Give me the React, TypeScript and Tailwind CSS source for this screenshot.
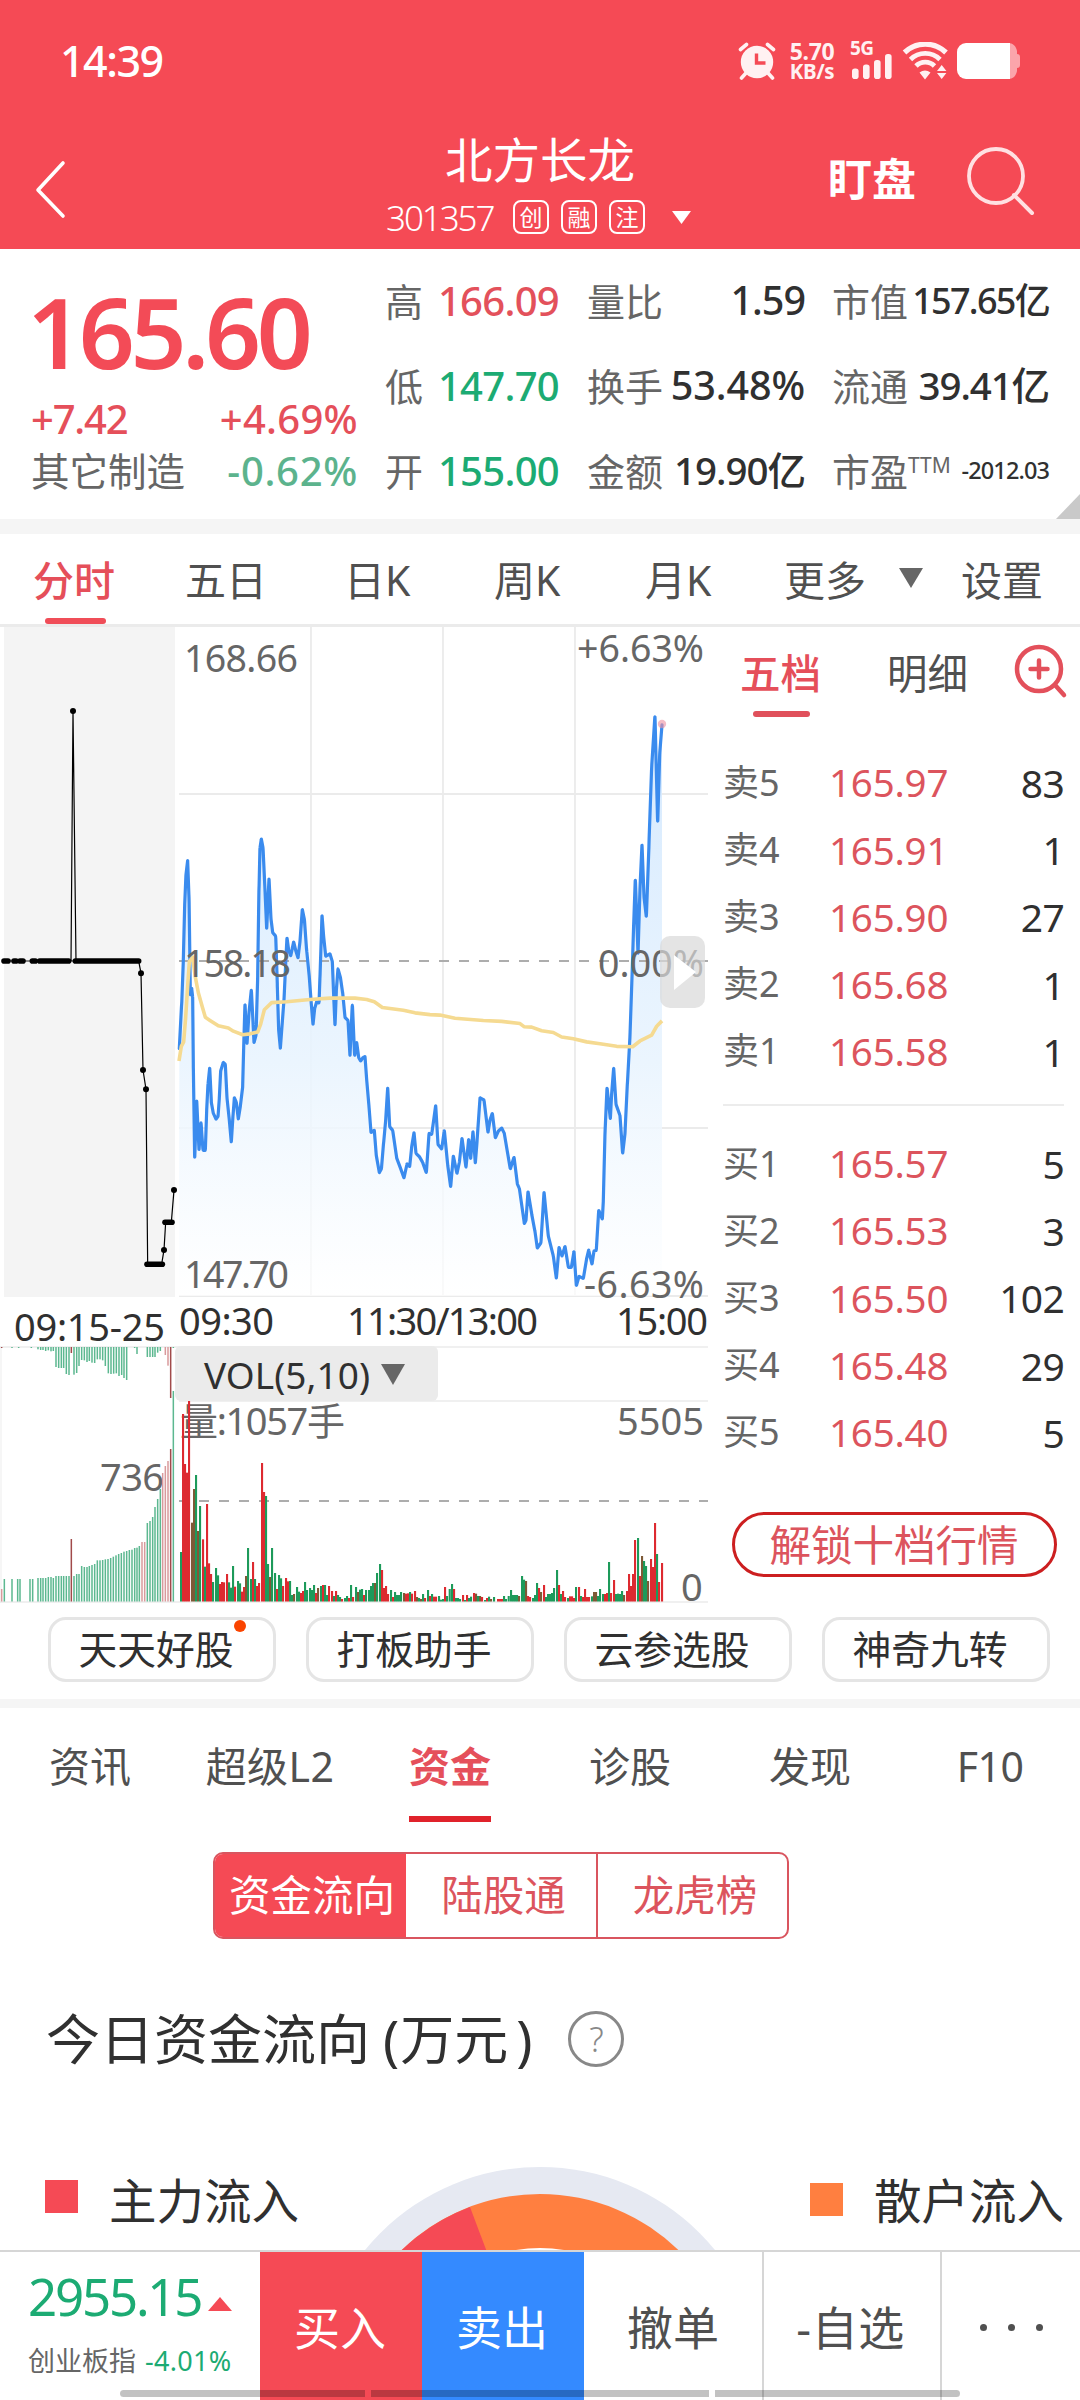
import React from "react";

type Pt = [number, number];
type Bar = [number, number, "r" | "g" | "b"];

const FONT = "font-['Noto_Sans','Noto_Sans_CJK_SC',sans-serif]";

/* Chart data: [u, v] pairs, three units per pixel across and 2.24 per pixel down. */
const PRICE: Pt[] = [
  [28,960],[35,860],[40,760],[44,640],[48,570],[53,538],[57,620],[61,840],[65,825],[68,845],[70,1000],[74,1207],[80,1075],[87,1188],[93,1125],[99,1188],[106,1188],[110,1100],[114,1040],[119,1003],[124,1080],[130,1105],[138,1118],[144,1112],[148,1070],[152,1010],[160,991],[166,995],[171,1070],[178,1120],[184,1170],[189,1110],[193,1070],[199,1080],[205,1118],[211,1090],[218,1045],[221,960],[225,860],[231,950],[237,880],[244,828],[252,947],[258,930],[263,800],[267,600],[270,510],[274,490],[279,510],[284,590],[290,693],[297,578],[303,670],[308,700],[317,708],[322,820],[326,920],[331,960],[336,910],[342,850],[347,770],[351,712],[356,740],[362,752],[367,735],[371,721],[377,740],[384,757],[390,720],[397,648],[403,670],[410,740],[418,800],[424,860],[429,906],[434,870],[440,855],[447,858],[450,800],[456,661],[461,710],[467,753],[480,748],[487,765],[491,840],[495,908],[499,830],[504,781],[511,800],[518,835],[525,890],[534,897],[540,977],[547,860],[554,976],[560,946],[566,980],[572,988],[579,980],[585,978],[590,1030],[597,1090],[603,1148],[613,1143],[619,1200],[628,1238],[634,1230],[641,1170],[647,1120],[653,1047],[659,1135],[668,1143],[680,1205],[690,1225],[702,1250],[711,1218],[719,1224],[725,1180],[732,1148],[738,1195],[748,1202],[758,1215],[769,1238],[777,1150],[785,1152],[791,1120],[797,1087],[804,1175],[815,1185],[823,1143],[833,1220],[842,1270],[850,1200],[861,1240],[868,1215],[876,1160],[888,1227],[896,1163],[902,1207],[909,1145],[916,1217],[921,1170],[930,1070],[942,1075],[954,1148],[960,1120],[967,1105],[976,1160],[985,1145],[995,1138],[1003,1150],[1021,1230],[1032,1203],[1042,1263],[1048,1273],[1063,1352],[1068,1345],[1074,1280],[1085,1330],[1095,1370],[1102,1407],[1113,1395],[1122,1280],[1135,1380],[1150,1425],[1159,1475],[1167,1405],[1176,1425],[1185,1403],[1195,1450],[1204,1450],[1212,1414],[1219,1491],[1227,1470],[1240,1475],[1250,1430],[1256,1411],[1266,1443],[1272,1413],[1279,1412],[1286,1322],[1297,1342],[1300,1300],[1305,1150],[1311,1047],[1321,1118],[1325,1060],[1331,1003],[1338,1085],[1350,1110],[1358,1195],[1365,1150],[1372,1040],[1380,930],[1386,800],[1391,680],[1396,580],[1404,750],[1410,600],[1416,502],[1422,620],[1429,665],[1437,500],[1445,330],[1455,213],[1463,455],[1469,300],[1476,235],
];

const AVERAGE: Pt[] = [
  [27,988],[34,955],[41,945],[47,890],[53,820],[58,765],[68,755],[76,800],[85,835],[97,867],[106,890],[120,897],[145,909],[175,914],[190,921],[218,929],[240,927],[263,923],[272,905],[283,873],[305,857],[350,855],[420,850],[480,847],[555,847],[590,850],[613,855],[637,868],[700,874],[735,880],[780,884],[810,885],[855,892],[940,897],[995,899],[1050,904],[1062,911],[1085,912],[1115,920],[1150,924],[1175,934],[1210,938],[1250,945],[1290,949],[1340,955],[1388,956],[1410,943],[1445,930],[1460,910],[1476,898],
];

const AUCTION: Pt[] = [
  [213,764],[219,204],[228,764],[416,764],[423,791],[429,1008],[438,1051],[443,1443],[485,1443],[492,1411],[497,1349],[514,1349],[522,1277],
];

const AUCTION_DOTS: Pt[] = [[219,204],[423,791],[429,1008],[438,1051],[492,1411],[522,1277]];

/* Per-minute volume: [u, top, tone], three units per pixel on both axes. */
const VOLUME: Bar[] = [
  [543,786,"g"],[549,372,"r"],[555,522,"r"],[561,548,"r"],[567,333,"r"],[576,698,"b"],[582,597,"b"],[588,555,"g"],[594,723,"b"],[600,648,"g"],[609,748,"r"],[615,830,"g"],[621,642,"r"],[627,820,"r"],[633,852,"r"],[639,876,"g"],[648,834,"g"],[654,856,"g"],[660,882,"r"],[666,876,"r"],[672,877,"r"],[681,852,"r"],[687,877,"g"],[693,893,"g"],[699,828,"g"],[705,890,"r"],[714,873,"g"],[720,880,"g"],[726,905,"r"],[732,891,"r"],[738,858,"b"],[744,774,"g"],[753,867,"g"],[759,816,"r"],[765,867,"g"],[771,888,"r"],[777,879,"r"],[786,519,"r"],[792,606,"r"],[798,618,"g"],[804,822,"g"],[810,861,"b"],[816,774,"g"],[825,849,"g"],[831,897,"r"],[837,855,"g"],[843,865,"g"],[849,888,"r"],[858,864,"r"],[864,874,"r"],[870,873,"g"],[876,915,"g"],[882,912,"b"],[891,891,"g"],[897,905,"g"],[903,909,"r"],[909,903,"r"],[915,876,"g"],[921,900,"g"],[930,894,"g"],[936,900,"g"],[942,885,"g"],[948,909,"r"],[954,894,"b"],[963,888,"g"],[969,885,"r"],[975,885,"g"],[981,915,"g"],[987,888,"r"],[996,903,"r"],[1002,918,"g"],[1008,903,"r"],[1014,915,"g"],[1020,921,"g"],[1026,927,"r"],[1035,924,"g"],[1041,918,"g"],[1047,924,"r"],[1053,885,"g"],[1059,921,"r"],[1068,891,"g"],[1074,906,"b"],[1080,899,"g"],[1086,897,"g"],[1092,915,"r"],[1098,900,"g"],[1107,900,"g"],[1113,888,"g"],[1119,879,"g"],[1125,879,"b"],[1131,849,"g"],[1140,822,"g"],[1146,840,"r"],[1152,894,"r"],[1158,888,"r"],[1164,912,"r"],[1173,900,"g"],[1179,921,"r"],[1185,906,"g"],[1191,915,"g"],[1197,915,"g"],[1203,906,"g"],[1212,909,"b"],[1218,911,"r"],[1224,910,"r"],[1230,906,"g"],[1236,911,"r"],[1245,903,"r"],[1251,921,"b"],[1257,924,"g"],[1263,927,"b"],[1269,912,"g"],[1275,924,"r"],[1284,900,"g"],[1290,918,"r"],[1296,912,"g"],[1302,920,"r"],[1308,920,"r"],[1317,918,"g"],[1323,929,"g"],[1329,927,"g"],[1335,891,"r"],[1341,918,"g"],[1349,897,"g"],[1356,882,"g"],[1362,897,"r"],[1368,924,"g"],[1374,924,"g"],[1380,927,"g"],[1389,915,"r"],[1395,930,"g"],[1401,915,"r"],[1407,924,"g"],[1413,920,"g"],[1422,909,"r"],[1428,911,"b"],[1434,918,"g"],[1440,918,"b"],[1446,921,"r"],[1455,930,"g"],[1461,924,"r"],[1467,920,"g"],[1473,927,"b"],[1482,921,"g"],[1494,927,"r"],[1500,927,"r"],[1506,927,"r"],[1512,918,"g"],[1518,927,"g"],[1526,918,"g"],[1533,900,"g"],[1539,915,"g"],[1545,915,"g"],[1551,915,"g"],[1557,918,"b"],[1566,858,"g"],[1572,869,"g"],[1578,873,"b"],[1584,918,"r"],[1590,921,"r"],[1599,924,"g"],[1605,915,"g"],[1611,879,"g"],[1617,894,"r"],[1623,906,"b"],[1632,885,"r"],[1638,921,"g"],[1644,912,"g"],[1650,912,"g"],[1656,909,"g"],[1662,894,"g"],[1671,840,"g"],[1677,885,"r"],[1683,912,"g"],[1689,903,"r"],[1695,921,"r"],[1704,924,"g"],[1710,919,"r"],[1716,919,"r"],[1722,924,"r"],[1728,891,"g"],[1737,891,"r"],[1743,918,"g"],[1749,921,"r"],[1755,897,"r"],[1761,921,"r"],[1767,921,"r"],[1776,919,"g"],[1782,906,"b"],[1788,906,"b"],[1794,918,"g"],[1800,897,"g"],[1809,912,"g"],[1815,912,"r"],[1821,909,"r"],[1827,816,"g"],[1833,909,"r"],[1842,870,"r"],[1848,912,"g"],[1854,911,"g"],[1860,912,"g"],[1866,903,"g"],[1872,915,"b"],[1881,903,"r"],[1887,852,"r"],[1893,888,"r"],[1899,852,"r"],[1905,750,"r"],[1914,744,"g"],[1920,858,"r"],[1926,798,"b"],[1932,813,"g"],[1938,828,"g"],[1944,873,"b"],[1953,807,"r"],[1959,831,"r"],[1965,699,"r"],[1971,792,"g"],[1977,876,"r"],[1986,819,"r"],
];

const AUCTION_VOLUME: Bar[] = [
  [5,897,"r"],[13,867,"g"],[36,867,"g"],[53,867,"g"],[60,867,"g"],[90,867,"g"],[98,867,"g"],[114,864,"g"],[122,864,"g"],[129,864,"g"],[137,864,"g"],[145,861,"g"],[153,861,"g"],[160,864,"g"],[168,858,"g"],[176,858,"g"],[184,858,"g"],[191,858,"g"],[199,858,"g"],[207,858,"g"],[214,747,"b"],[222,858,"g"],[230,852,"g"],[237,852,"g"],[245,828,"g"],[253,831,"g"],[261,831,"g"],[268,828,"g"],[276,825,"g"],[284,822,"g"],[292,811,"g"],[300,811,"g"],[308,810,"g"],[316,808,"g"],[324,807,"g"],[332,804,"g"],[340,800,"g"],[348,796,"g"],[356,792,"g"],[364,789,"g"],[372,785,"g"],[380,783,"g"],[388,780,"g"],[396,779,"g"],[404,774,"g"],[411,773,"g"],[418,768,"g"],[426,756,"r"],[434,756,"r"],[442,699,"g"],[450,693,"g"],[458,681,"g"],[465,651,"g"],[473,627,"g"],[481,597,"g"],[488,549,"r"],[496,528,"r"],[504,513,"r"],[512,477,"b"],[520,303,"g"],
];

const AUCTION_UNMATCHED: Bar[] = [
  [5,174,"b"],[36,174,"g"],[56,174,"g"],[94,174,"g"],[114,178,"g"],[122,180,"g"],[129,180,"g"],[137,183,"g"],[145,181,"g"],[153,184,"g"],[160,183,"g"],[168,231,"g"],[176,234,"g"],[184,234,"g"],[191,234,"g"],[199,252,"g"],[207,255,"g"],[214,189,"b"],[222,254,"g"],[230,249,"g"],[237,228,"g"],[245,210,"g"],[253,211,"g"],[261,216,"g"],[268,213,"g"],[276,218,"g"],[284,219,"g"],[292,208,"g"],[300,208,"g"],[308,211,"g"],[316,228,"g"],[325,250,"g"],[333,252,"g"],[341,251,"g"],[349,250,"g"],[357,258,"g"],[365,255,"g"],[372,264,"g"],[380,270,"g"],[404,174,"g"],[411,192,"g"],[442,201,"g"],[450,201,"g"],[458,201,"g"],[465,201,"g"],[473,188,"g"],[481,183,"g"],[496,195,"r"],[504,227,"r"],[512,324,"b"],[520,174,"g"],
];

const TONE = { r: "#dd2a30", g: "#1d9a5a", b: "#7d5a36" };
const SOFT = { r: "#d99a9c", g: "#5cb890", b: "#a14a4a" };

const CHART_TOP = 627;
const px = (u: number) => u / 3 + 170;
const py = (v: number) => v / 2.24 + 620 - CHART_TOP;
const vy = (v: number) => v / 3 + 1290 - CHART_TOP;

/* Polyline whose corners are slightly rounded around each vertex. */
function smooth(pts: Pt[]) {
  const p = pts.map(([u, v]) => [px(u), py(v)]);
  let d = `M${p[0][0].toFixed(1)} ${p[0][1].toFixed(1)}`;
  for (let i = 1; i < p.length - 1; i++) {
    const [ax, ay] = p[i - 1], [bx, by] = p[i], [cx, cy] = p[i + 1];
    const k = 0.05;
    d += `L${(bx + (ax - bx) * k).toFixed(1)} ${(by + (ay - by) * k).toFixed(1)}Q${bx.toFixed(1)} ${by.toFixed(1)} ${(bx + (cx - bx) * k).toFixed(1)} ${(by + (cy - by) * k).toFixed(1)}`;
  }
  const l = p[p.length - 1];
  return d + `L${l[0].toFixed(1)} ${l[1].toFixed(1)}`;
}

function StatusBar() {
  return (
    <div className="flex h-[121px] items-center pl-[60px] pr-[60px] text-white">
      <span className="text-[43px] leading-none font-medium tracking-[-1.500px]">14:39</span>
      <svg className="ml-auto" width="38" height="38" viewBox="0 0 38 38">
        <circle cx="19" cy="20" r="16.2" fill="#fff1f2" />
        <path d="M2.5 7.500 8.500 2.500M35.500 7.500 29.500 2.500M8 31l-4.500 5M30 31l4.500 5" stroke="#fff1f2" strokeWidth="3.600" strokeLinecap="round" />
        <path d="M18.500 11.500v9.500h9" fill="none" stroke="#f54a55" strokeWidth="3.400" />
      </svg>
      <div className="ml-[12px] flex w-[48px] flex-col items-center text-[23px] leading-[20px] font-bold tracking-[-0.400px] text-[#fff1f2]">
        <span>5.70</span>
        <span className="text-[20.500px]">KB/s</span>
      </div>
      <div className="ml-[14px] flex w-[44px] flex-col text-[#fff1f2]">
        <span className="h-[11px] text-[19px] leading-[13px] font-bold tracking-[-0.5px]">5G</span>
        <svg width="44" height="27" viewBox="0 0 44 27" fill="#fff1f2">
          <rect x="2" y="15.500" width="6.600" height="10.500" rx="2.800" />
          <rect x="13" y="11.500" width="6.600" height="14.500" rx="2.800" />
          <rect x="24" y="7" width="6.600" height="19" rx="2.800" />
          <rect x="35" y="1" width="6.600" height="25" rx="2.800" />
        </svg>
      </div>
      <svg className="ml-[8px]" width="47" height="38" viewBox="0 0 47 38">
        <g fill="none" stroke="#fff1f2" strokeLinecap="butt">
          <path d="M2.500 10.500a30 30 0 0 1 41.500 0" strokeWidth="5.200" />
          <path d="M8.500 17.500a21 21 0 0 1 29.500 0" strokeWidth="4.800" />
          <path d="M14 24a13 13 0 0 1 18.500 0" strokeWidth="4.800" />
        </g>
        <path d="M17.500 30.500q5.500-4 11 0L23 37.500zM35 29l4.700-6 4.700 6zM35 31h9.400l-4.700 6z" fill="#fff1f2" />
      </svg>
      <svg className="ml-[7px]" width="64" height="38" viewBox="0 0 64 38">
        <path d="M52 1c5 0 8 3 9 8v3q3 0 3 3v8q0 3-3 3v3c-1 5-4 8-9 8z" fill="#fba5ab" />
        <path d="M10 1h44v36H10a9 9 0 0 1-9-9V10a9 9 0 0 1 9-9z" fill="#fff" />
      </svg>
    </div>
  );
}

function Header() {
  return (
    <header className="h-[249px] bg-[#f54a55] text-white">
      <StatusBar />
      <div className="flex h-[128px] pt-[1px]">
        <svg className="mt-[37px] ml-[33px]" width="36" height="62" viewBox="0 0 36 62">
          <path d="M30 4 5 31l25 26" fill="none" stroke="#fff" strokeWidth="3.600" strokeLinecap="round" strokeLinejoin="round" />
        </svg>
        <div className="ml-[317px] flex w-[306px] flex-col">
          <h1 className="mt-[14px] ml-[59px] text-[47.500px] leading-[48px] font-normal">北方长龙</h1>
          <div className="mt-[13px] flex h-[40px] items-center">
            <span className="w-[127px] text-[35px] leading-none font-light tracking-[-2.100px]">301357</span>
            <div className="flex gap-[12px]">
              {["创", "融", "注"].map((t) => (
                <span key={t} className="flex h-[34px] w-[36px] items-center justify-center rounded-[8px] border-2 border-white text-[23px] leading-none">{t}</span>
              ))}
            </div>
            <svg className="ml-[26px]" width="21" height="13" viewBox="0 0 21 13"><path d="M1 0h19l-9.500 13z" fill="#fff" /></svg>
          </div>
        </div>
        <span className="mt-[35px] ml-[136px] text-[44px] leading-[44px] font-bold">盯盘</span>
        <svg className="mt-[23px] ml-[50px]" width="70" height="72" viewBox="0 0 70 72">
          <circle cx="30" cy="31" r="27" fill="none" stroke="#ffe0e2" strokeWidth="3.800" />
          <path d="M48 50l18 18" stroke="#ffe0e2" strokeWidth="4" strokeLinecap="round" />
        </svg>
      </div>
    </header>
  );
}

function StatRow({ label, children }: { label: React.ReactNode; children: React.ReactNode }) {
  return (
    <div className="flex h-[85px] items-center justify-between whitespace-nowrap">
      <span className="text-[38px] leading-none text-[#666]">{label}</span>
      {children}
    </div>
  );
}

function Quote() {
  const num = "text-[40px] leading-none font-medium tracking-[-0.700px]";
  const dark = "text-[39.500px] leading-none font-medium text-[#303030]";
  return (
    <section className="relative flex h-[270px] pt-[9px]">
      <div className="ml-[31px] w-[327px]">
        <div className="mt-[24px] -ml-[4px] text-[98px] leading-[98px] font-semibold tracking-[-4.300px] text-[#f34b57]">165.60</div>
        <div className="mt-[20px] flex h-[38px] items-center justify-between text-[40px] leading-none font-medium text-[#e54f5a]">
          <span className="tracking-[-1.200px]">+7.42</span>
          <span className="tracking-[0.300px]">+4.69%</span>
        </div>
        <div className="mt-[14px] flex h-[38px] items-center justify-between">
          <span className="text-[38.500px] leading-none text-[#666]">其它制造</span>
          <span className="text-[40px] leading-none font-medium tracking-[0.700px] text-[#5cb38d]">-0.62%</span>
        </div>
      </div>
      <div className="ml-[27px] w-[174px]">
        <StatRow label="高"><span className={num + " text-[#e3515b]"}>166.09</span></StatRow>
        <StatRow label="低"><span className={num + " text-[#1cab73]"}>147.70</span></StatRow>
        <StatRow label="开"><span className={num + " text-[#1cab73]"}>155.00</span></StatRow>
      </div>
      <div className="ml-[28px] w-[218px]">
        <StatRow label="量比"><span className={dark + " tracking-[-1px]"}>1.59</span></StatRow>
        <StatRow label="换手"><span className={dark + " tracking-[-0.100px]"}>53.48%</span></StatRow>
        <StatRow label="金额"><span className="text-[38.500px] leading-none font-medium tracking-[-1px] text-[#303030]">19.90亿</span></StatRow>
      </div>
      <div className="ml-[27px] w-[217px]">
        <StatRow label="市值"><span className="text-[36px] leading-none font-medium tracking-[-1.700px] text-[#303030]">157.65亿</span></StatRow>
        <StatRow label="流通"><span className="text-[38.500px] leading-none font-medium tracking-[-1.100px] text-[#303030]">39.41亿</span></StatRow>
        <StatRow label={<>市盈<span className="inline-block -translate-y-[13px] text-[21px]">TTM</span></>}>
          <span className="text-[23.500px] leading-none font-medium tracking-[-0.900px] text-[#303030]">-2012.03</span>
        </StatRow>
      </div>
      <svg className="absolute right-0 bottom-0" width="24" height="25" viewBox="0 0 24 25"><path d="M24 0v25H0z" fill="#c9c9c9" /></svg>
    </section>
  );
}

function PeriodTabs() {
  const t = "text-[41px] leading-none text-[#505050] whitespace-nowrap pt-[2px]";
  return (
    <nav className="flex h-[93px] items-center border-b-3 border-[#ebebeb]">
      <div className="relative ml-[33px] flex h-full w-[152px] items-center">
        <span className="pt-[2px] text-[41px] leading-none font-medium text-[#e54f5a]">分时</span>
        <span className="absolute bottom-[0px] left-[12px] h-[6px] w-[61px] rounded-full bg-[#f04d58]" />
      </div>
      <span className={t + " w-[159px]"}>五日</span>
      <span className={t + " w-[150px]"}>日K</span>
      <span className={t + " w-[151px]"}>周K</span>
      <span className={t + " w-[139px]"}>月K</span>
      <span className={t + " w-[115px]"}>更多</span>
      <svg className="-mt-[3px]" width="25" height="20" viewBox="0 0 25 20"><path d="M0 0h24L12 20z" fill="#666" /></svg>
      <span className={t + " ml-[37px]"}>设置</span>
    </nav>
  );
}

function AuctionDashes() {
  const runs: Pt[] = [[12,24],[42,48],[60,69],[97,106],[119,206],[226,416],[441,487],[495,516]];
  const ys = [764, 764, 764, 764, 764, 764, 1443, 1349];
  return (
    <g stroke="#000" strokeWidth="5.600" strokeLinecap="round">
      {runs.map(([a, b], i) => (
        <line key={a} x1={a / 3} x2={b / 3} y1={py(ys[i])} y2={py(ys[i])} />
      ))}
    </g>
  );
}

function Charts() {
  const line = smooth(PRICE);
  const base = 1603 - CHART_TOP;
  const lbl = { fontSize: 37.500, fill: "#666" };
  const time = { fontSize: 38, fill: "#303030" };
  return (
    <svg width="712" height="978" viewBox="0 0 712 978" className="block shrink-0">
      <defs>
        <linearGradient id="area" x1="0" y1="0" x2="0" y2="1">
          <stop offset="0" stopColor="#d3e8fe" stopOpacity="0.95" />
          <stop offset="0.6" stopColor="#e9f4fe" stopOpacity="0.9" />
          <stop offset="1" stopColor="#fff" stopOpacity="0.7" />
        </linearGradient>
      </defs>
      <rect x="4" y="0" width="171" height="670" fill="#f4f4f4" />
      <g stroke="#ebebeb" strokeWidth="1.800">
        <path d="M311 0V669M443 0V669M575 0V669" />
        <path d="M179 167H708M179 501H708M179 669H708" />
      </g>
      <path d={`${line}L${px(1476)} 669L179 669Z`} fill="url(#area)" />
      <path d="M179 334H708" stroke="#adadad" strokeWidth="2" strokeDasharray="10 10" />

      <line x1="4" x2="139" y1="334" y2="334" stroke="#000" strokeWidth="0.900" />
      <polyline points={AUCTION.map(([u, v]) => `${u / 3},${py(v)}`).join(" ")} fill="none" stroke="#000" strokeWidth="1.200" />
      <AuctionDashes />
      {AUCTION_DOTS.map(([u, v]) => <circle key={u} cx={u / 3} cy={py(v)} r="3" />)}

      <path d={line} fill="none" stroke="#3a8bee" strokeWidth="3.200" strokeLinejoin="round" strokeLinecap="round" />
      <polyline points={AVERAGE.map(([u, v]) => `${px(u)},${py(v)}`).join(" ")} fill="none" stroke="#f5da91" strokeWidth="3.600" strokeLinejoin="round" />
      <circle cx={px(1476)} cy={py(233)} r="4.200" fill="#ee8fa0" fillOpacity="0.600" />

      <g {...lbl}>
        <text x="184" y="45" textLength="114">168.66</text>
        <text x="184" y="350" textLength="107">158.18</text>
        <text x="184" y="661" textLength="105">147.70</text>
        <text x="577" y="35" textLength="127">+6.63%</text>
        <text x="598" y="350" textLength="106">0.00%</text>
        <text x="584" y="671" textLength="120">-6.63%</text>
      </g>
      <rect x="660" y="309" width="45" height="72" rx="10" fill="#d9d9d9" fillOpacity="0.700" />
      <path d="M674 328l22 17-22 18z" fill="#fff" />

      <g {...time}>
        <text x="14" y="714" textLength="151">09:15-25</text>
        <text x="179" y="708" textLength="95">09:30</text>
        <text x="347" y="708" textLength="191">11:30/13:00</text>
        <text x="616" y="708" textLength="92">15:00</text>
      </g>

      <path d="M0 720H708M179 774H708M0 975H708" stroke="#ebebeb" strokeWidth="1.400" />
      <path d="M1 720V976" stroke="#ededed" strokeWidth="1" />
      <text x="100" y="864" textLength="64" fontSize="38" fill="#666">736</text>
      {AUCTION_VOLUME.map(([u, v, c]) => (
        <rect key={u} x={u / 3 - 0.750} y={vy(v)} width="1.500" height={base - 1.500 - vy(v)} fill={SOFT[c]} />
      ))}
      {AUCTION_UNMATCHED.map(([u, v, c]) => (
        <rect key={u} x={u / 3 - 0.750} y="720" width="1.500" height={vy(v) - 720} fill={SOFT[c]} />
      ))}

      <rect x="175" y="719" width="263" height="55" rx="6" fill="#ebebeb" />
      <text x="204" y="762" textLength="166" fontSize="37" fill="#303030">VOL(5,10)</text>
      <path d="M381 737h24l-12 21z" fill="#666" />
      <path d="M179 874H708" stroke="#adadad" strokeWidth="2" strokeDasharray="10 10" />
      <text x="180" y="808" textLength="165" fontSize="38" fill="#666">量:1057手</text>
      <text x="617" y="808" textLength="87" fontSize="38" fill="#666">5505</text>
      <text x="681" y="974" fontSize="38" fill="#666">0</text>
      {VOLUME.map(([u, v, c]) => (
        <rect key={u} x={u / 3 - 1} y={vy(v)} width="2.100" height={base - 1.500 - vy(v)} fill={TONE[c]} />
      ))}
    </svg>
  );
}

function OrderRow({ name, price, qty }: { name: string; price: string; qty: string }) {
  return (
    <div className="flex h-[67.200px] items-center text-[38.500px] leading-none">
      <span className="w-[106px] text-[36px] text-[#666]">{name}</span>
      <span className="tracking-[-0.200px] text-[#dc545d]">{price}</span>
      <span className="ml-auto text-[39px] tracking-[-0.700px] text-[#303030]">{qty}</span>
    </div>
  );
}

const SELLS = [["卖5", "165.97", "83"], ["卖4", "165.91", "1"], ["卖3", "165.90", "27"], ["卖2", "165.68", "1"], ["卖1", "165.58", "1"]];
const BUYS = [["买1", "165.57", "5"], ["买2", "165.53", "3"], ["买3", "165.50", "102"], ["买4", "165.48", "29"], ["买5", "165.40", "5"]];

function OrderBook() {
  return (
    <aside className="flex w-[368px] flex-col pr-[16px] pl-[11px]">
      <div className="flex h-[122px]">
        <div className="relative ml-[17px] h-[90px] w-[147px] shrink-0 pt-[27px]">
          <span className="text-[40.500px] leading-[40px] font-medium text-[#e54f5a]">五档</span>
          <span className="absolute top-[84px] left-[13px] h-[6px] w-[57px] rounded-full bg-[#e0505b]" />
        </div>
        <span className="w-[82px] shrink-0 pt-[27px] text-[40.500px] leading-[40px] whitespace-nowrap text-[#505050]">明细</span>
        <svg className="mt-[15px] ml-[44px] shrink-0" width="56" height="60" viewBox="0 0 56 60">
          <g fill="none" stroke="#e3505b" strokeWidth="4.500" strokeLinecap="round">
            <circle cx="26" cy="27" r="22" />
            <path d="M42 43l9 10M26 18.500v17M17.500 27h17" />
          </g>
        </svg>
      </div>
      <div>{SELLS.map(([n, p, q]) => <OrderRow key={n} name={n} price={p} qty={q} />)}</div>
      <div className="mt-[19px] h-[2px] bg-[#ececec]" />
      <div className="mt-[24px]">{BUYS.map(([n, p, q]) => <OrderRow key={n} name={n} price={p} qty={q} />)}</div>
      <button className="mt-[46px] ml-[9px] flex h-[65px] w-[325px] items-center justify-center rounded-full border-3 border-[#cc1f20] pt-[2px] pr-[1px] text-[41.500px] leading-none whitespace-nowrap text-[#dc545d]">解锁十档行情</button>
    </aside>
  );
}

function Shortcuts() {
  return (
    <div className="flex h-[95px] gap-[30px] pt-[13px] pl-[48px]">
      {["天天好股", "打板助手", "云参选股", "神奇九转"].map((t, i) => (
        <div key={t} className="relative flex h-[65px] w-[228px] items-center justify-center rounded-[18px] border-3 border-[#e5e5e5] pr-[12px] text-[38.800px] leading-none text-[#303030]">
          {t}
          {i === 0 && <span className="absolute top-[0px] right-[27px] h-[12px] w-[12px] rounded-full bg-[#fa4400]" />}
        </div>
      ))}
    </div>
  );
}

function SectionTabs() {
  const t = "w-[180px] text-center text-[41px] leading-none";
  return (
    <nav className="flex h-[144px] pt-[38px] text-[#505050]">
      <span className={t}>资讯</span>
      <span className={t + " tracking-[0.400px]"}>超级L2</span>
      <div className="relative w-[180px] text-center text-[41px] leading-none font-bold text-[#e5505b]">
        资金
        <span className="absolute top-[70px] left-[49px] h-[6px] w-[82px] bg-[#e0222b]" />
      </div>
      <span className={t}>诊股</span>
      <span className={t}>发现</span>
      <span className={t + " tracking-[-0.500px]"}>F10</span>
    </nav>
  );
}

function FundFlow() {
  return (
    <section className="h-[398px] overflow-hidden">
      <div className="ml-[213px] flex h-[87px] w-[576px] overflow-hidden rounded-[10px] border-2 border-[#d9555f] text-[41.500px] leading-none text-[#dc545d]">
        <span className="flex w-[191px] items-center justify-center bg-[#f54a55] pl-[3px] whitespace-nowrap text-white">资金流向</span>
        <span className="flex w-[192px] items-center justify-center border-r-2 border-[#d9555f] pl-[5px]">陆股通</span>
        <span className="flex flex-1 items-center justify-center pl-[5px]">龙虎榜</span>
      </div>
      <div className="mt-[71px] ml-[46px] flex h-[57px] items-center">
        <h2 className="text-[54px] leading-none font-normal whitespace-nowrap text-[#303030]">
          今日资金流向<span className="ml-[13px]">(</span><span className="ml-[1px]">万元</span><span className="ml-[8px]">)</span>
        </h2>
        <div className="ml-[36px] flex h-[56px] w-[56px] items-center justify-center rounded-full border-3 border-[#888] text-[34px] leading-none font-light text-[#888]">?</div>
      </div>
      <div className="mt-[100px] flex">
        <div className="mt-[13px] ml-[45px] h-[33px] w-[33px] bg-[#f54a55]" />
        <span className="mt-[10px] ml-[31px] w-[190px] text-[47.500px] leading-[48px] text-[#303030]">主力流入</span>
        <svg className="ml-[15px] block" width="452" height="84" viewBox="0 0 452 84">
          <circle cx="226" cy="226" r="226" fill="#e6e9f2" />
          <circle cx="226" cy="226" r="199" fill="#ff7f40" />
          <path d="M226 226 156 40A199 199 0 0 0 27 226z" fill="#f54a55" />
          <circle cx="226" cy="226" r="145" fill="#fff" />
        </svg>
        <div className="mt-[16px] ml-[44px] h-[33px] w-[33px] bg-[#ff7f40]" />
        <span className="mt-[10px] ml-[31px] text-[47.500px] leading-[48px] whitespace-nowrap text-[#303030]">散户流入</span>
      </div>
    </section>
  );
}

function TradeBar() {
  const b = "flex items-center justify-center pt-[2px] text-[46px] leading-none whitespace-nowrap";
  return (
    <footer className="relative flex h-[150px] border-t-2 border-[#d6d6d6] bg-white">
      <div className="w-[260px] pl-[28px]">
        <div className="mt-[19px] flex items-center text-[51px] leading-[50px] tracking-[-2.200px] text-[#1cab73]">
          2955.15
          <svg className="mt-[15px] ml-[7px]" width="24" height="14" viewBox="0 0 24 14"><path d="M12 0l12 14H0z" fill="#f54a55" /></svg>
        </div>
        <div className="mt-[26px] flex items-center text-[27px] leading-[28px] text-[#666]">
          创业板指<span className="ml-[9px] tracking-[0.300px] text-[#1cab73]">-4.01%</span>
        </div>
      </div>
      <div className={b + " w-[162px] bg-[#f54a55] pr-[2px] text-white"}>买入</div>
      <div className={b + " w-[162px] bg-[#348aff] pr-[2px] text-white"}>卖出</div>
      <div className={b + " w-[180px] border-r-2 border-[#d6d6d6] text-[#505050]"}>撤单</div>
      <div className={b + " w-[178px] border-r-2 border-[#d6d6d6] pr-[3px] tracking-[0.500px] text-[#505050]"}>-自选</div>
      <div className="flex flex-1 items-center justify-center gap-[21px] pt-[2px]">
        {[0, 1, 2].map((i) => <span key={i} className="h-[7px] w-[7px] rounded-full bg-[#505050]" />)}
      </div>
      <div className="absolute bottom-[3px] left-[120px] flex h-[7px] w-[840px] gap-[6px] overflow-hidden rounded-full">
        <span className="w-[245px] bg-black/24" />
        <span className="w-[338px] bg-black/24" />
        <span className="flex-1 bg-black/24" />
      </div>
    </footer>
  );
}

export default function App() {
  return (
    <div className={`${FONT} flex h-[2400px] w-[1080px] flex-col overflow-hidden bg-white`}>
      <Header />
      <Quote />
      <div className="h-[15px] bg-[#f5f5f5]" />
      <PeriodTabs />
      <div className="flex h-[977px]">
        <Charts />
        <OrderBook />
      </div>
      <Shortcuts />
      <div className="h-[9px] bg-[#f5f5f5]" />
      <SectionTabs />
      <FundFlow />
      <TradeBar />
    </div>
  );
}
